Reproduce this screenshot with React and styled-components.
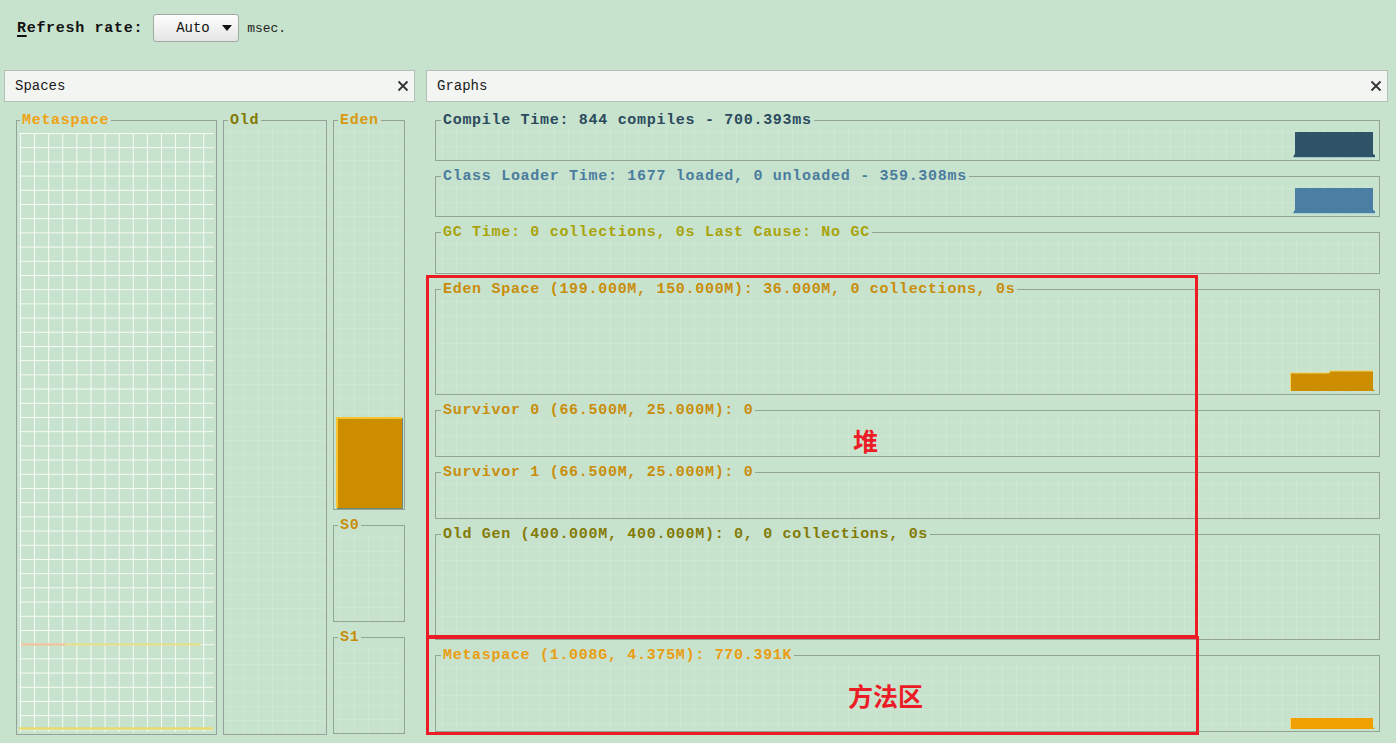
import styled, { createGlobalStyle } from "styled-components"

const GlobalStyle = createGlobalStyle`
  html, body {
    margin: 0;
    padding: 0;
    background: #C8E3CD;
  }
  body {
    font-family: "Liberation Mono", "DejaVu Sans Mono", monospace;
    color: #111;
  }
  * { box-sizing: border-box; }
`

const LEGEND = 16

const graphs = [
  { title: "Compile Time: 844 compiles - 700.393ms", color: "#2B4A5D", h: 49, bar: "compile" },
  { title: "Class Loader Time: 1677 loaded, 0 unloaded - 359.308ms", color: "#4A7C9E", h: 49, bar: "loader" },
  { title: "GC Time: 0 collections, 0s Last Cause: No GC", color: "#A8A30C", h: 50 },
  { title: "Eden Space (199.000M, 150.000M): 36.000M, 0 collections, 0s", color: "#C98D0C", h: 114, bar: "eden" },
  { title: "Survivor 0 (66.500M, 25.000M): 0", color: "#C98D0C", h: 55 },
  { title: "Survivor 1 (66.500M, 25.000M): 0", color: "#C98D0C", h: 55 },
  { title: "Old Gen (400.000M, 400.000M): 0, 0 collections, 0s", color: "#847A06", h: 114 },
  { title: "Metaspace (1.008G, 4.375M): 770.391K", color: "#E89D12", h: 85, bar: "meta" },
]

function Bar({ kind }) {
  if (kind === "compile" || kind === "loader") {
    const fill = kind === "compile" ? "#2F5468" : "#4A7FA3"
    return (
      <svg width="83" height="26" viewBox="0 0 83 26">
        <polygon points="2,0 80,0 80,22 82,23 82,26 0,26 1,23 2,22" fill={fill} />
        <line x1="0" y1="25.5" x2="83" y2="25.5" stroke="#BFE3EA" strokeWidth="0.8" />
      </svg>
    )
  }
  if (kind === "eden") {
    return (
      <svg width="86" height="22" viewBox="0 0 86 22">
        <polygon points="1,3 39,3 40,1 83,1 83,19 85,21 0,21 0,4" fill="#CC8E00" />
        <polyline points="0.5,21 0.5,3 39,3 40,1 83,1" fill="none" stroke="#F6D35A" strokeWidth="1" />
      </svg>
    )
  }
  return (
    <svg width="86" height="11" viewBox="0 0 86 11">
      <polygon points="1,0 83,0 83,9 85,11 0,11" fill="#F0A000" />
      <line x1="0.5" y1="0" x2="0.5" y2="11" stroke="#F8D66A" strokeWidth="1" />
    </svg>
  )
}

function Close() {
  return (
    <CloseBtn>
      <svg width="12" height="12" viewBox="0 0 12 12">
        <path d="M1.5 1.5 L10.5 10.5 M10.5 1.5 L1.5 10.5" stroke="#333" strokeWidth="1.8" />
      </svg>
    </CloseBtn>
  )
}

function MetaspaceChart({ h }) {
  return (
    <MetaGrid style={{ height: h }}>
      <svg width="100%" height="100%">
        <defs>
          <pattern id="mgrid" width="14.1" height="14.2" patternUnits="userSpaceOnUse" x="1" y="0">
            <path d="M0 0 L14.1 0 M0 0 L0 14.2" stroke="#F7FCF7" strokeWidth="1.9" fill="none" />
          </pattern>
        </defs>
        <rect x="0" y="0" width="100%" height="100%" fill="url(#mgrid)" />
        <line x1="2" y1="511.5" x2="182" y2="511.5" stroke="#E9DF86" strokeWidth="2" />
        <line x1="2" y1="511.5" x2="46" y2="511.5" stroke="#EFC2A8" strokeWidth="2" />
        <line x1="0" y1="595.5" x2="194" y2="595.5" stroke="#E9DA6C" strokeWidth="2.5" />
      </svg>
    </MetaGrid>
  )
}

export default function App() {
  return (
    <Page>
      <GlobalStyle />
      <Toolbar>
        <RateLabel><u>R</u>efresh rate:</RateLabel>
        <Dropdown>
          <span>Auto</span>
          <svg width="10" height="6" viewBox="0 0 10 6">
            <polygon points="0,0 10,0 5,6" fill="#111" />
          </svg>
        </Dropdown>
        <Unit>msec.</Unit>
      </Toolbar>
      <Panels>
        <Panel $w={411}>
          <PanelHeader>
            <span>Spaces</span>
            <Close />
          </PanelHeader>
          <SpacesBody>
            <Titled $w={201} $h={623}>
              <Legend $c="#F0A215" $ml={3}>Metaspace</Legend>
              <MetaspaceChart h={623 - LEGEND - 1 - 7} />
            </Titled>
            <Titled $w={104} $h={623}>
              <Legend $c="#847A06" $ml={4}>Old</Legend>
              <Plot $h={623 - LEGEND - 1} />
            </Titled>
            <EdenColumn>
              <Titled $h={398}>
                <Legend $c="#D99A12" $ml={4}>Eden</Legend>
                <Plot $h={398 - LEGEND - 1} $pad="0 2px 1px 2px">
                  <EdenFill />
                </Plot>
              </Titled>
              <Titled $h={105}>
                <Legend $c="#C98D0C" $ml={4}>S0</Legend>
                <Plot $h={105 - LEGEND - 1} />
              </Titled>
              <Titled $h={105}>
                <Legend $c="#C98D0C" $ml={4}>S1</Legend>
                <Plot $h={105 - LEGEND - 1} />
              </Titled>
            </EdenColumn>
          </SpacesBody>
        </Panel>
        <Panel $w={962}>
          <PanelHeader>
            <span>Graphs</span>
            <Close />
          </PanelHeader>
          <GraphsBody>
            {graphs.map((g) => (
              <Titled key={g.title} $h={g.h}>
                <Legend $c={g.color} $ml={5}>{g.title}</Legend>
                <Plot $h={g.h - LEGEND - 1} $pad="0 3px 2px 0">
                  {g.bar && <Bar kind={g.bar} />}
                </Plot>
              </Titled>
            ))}
            <Annotation $top={173} $h={363} $w={772}>
              <Note $left={424} $top={150}>堆</Note>
            </Annotation>
            <Annotation $top={534} $h={99} $w={773}>
              <Note $left={419} $top={44}>方法区</Note>
            </Annotation>
          </GraphsBody>
        </Panel>
      </Panels>
    </Page>
  )
}

const Page = styled.div`
  width: 1396px;
  height: 743px;
  overflow: hidden;
  background: #C8E3CD;
`
const Toolbar = styled.div`
  height: 70px;
  display: flex;
  align-items: center;
  padding: 0 0 14px 17px;
`
const RateLabel = styled.span`
  font: bold 15px/1 "Liberation Mono", monospace;
  letter-spacing: 0.7px;
  color: #111;
  margin-right: 10px;
  u { text-decoration-thickness: 2px; text-underline-offset: 3px; }
`
const Dropdown = styled.div`
  width: 86px;
  height: 28px;
  display: flex;
  align-items: center;
  gap: 12px;
  padding-left: 22px;
  border: 1px solid #A3A9A4;
  border-radius: 3px;
  background: linear-gradient(#FDFDFD, #E4E6E4);
  font: 14px/1 "Liberation Mono", monospace;
  color: #111;
  margin-right: 8px;
`
const Unit = styled.span`
  font: 13px/1 "Liberation Mono", monospace;
  color: #222;
`
const Panels = styled.div`
  display: flex;
  gap: 11px;
  padding-left: 4px;
`
const Panel = styled.section`
  width: ${(p) => p.$w}px;
  display: flex;
  flex-direction: column;
`
const PanelHeader = styled.div`
  height: 32px;
  display: flex;
  align-items: center;
  justify-content: space-between;
  padding: 0 4px 0 10px;
  background: #F3F5F2;
  border: 1px solid #B7C0B8;
  font: 14px/1 "Liberation Mono", monospace;
  color: #1A1A1A;
`
const CloseBtn = styled.span`
  display: flex;
  width: 14px;
  height: 14px;
  align-items: center;
  justify-content: center;
`
const SpacesBody = styled.div`
  display: flex;
  gap: 6px;
  padding: 10px 0 0 12px;
`
const EdenColumn = styled.div`
  width: 72px;
  display: flex;
  flex-direction: column;
  gap: 7px;
`
const Titled = styled.fieldset`
  margin: 0;
  padding: 0;
  min-width: 0;
  width: ${(p) => (p.$w ? `${p.$w}px` : "100%")};
  height: ${(p) => p.$h}px;
  border: 1px solid #95A299;
`
const Legend = styled.legend`
  margin-left: ${(p) => p.$ml}px;
  padding: 0 2px;
  height: ${LEGEND}px;
  font: bold 15px/18px "Liberation Mono", monospace;
  letter-spacing: 0.7px;
  color: ${(p) => p.$c};
  white-space: nowrap;
`
const Plot = styled.div`
  height: ${(p) => p.$h}px;
  display: flex;
  flex-direction: column;
  align-items: flex-end;
  justify-content: flex-end;
  padding: ${(p) => p.$pad || "0"};
  background-image:
    linear-gradient(90deg, rgba(255, 255, 255, 0.14) 1px, transparent 1px),
    linear-gradient(rgba(255, 255, 255, 0.1) 1px, transparent 1px);
  background-size: 14px 14px;
  background-position: 6px 4px;
`
const EdenFill = styled.div`
  width: 100%;
  height: 91px;
  background: #CC8E00;
  border-top: 2px solid #F7C531;
  border-left: 2px solid #F7C531;
  box-shadow: 1px 1px 0 #6E8A6E;
`
const MetaGrid = styled.div`
  margin: 5px 2px 2px 2px;
`
const GraphsBody = styled.div`
  position: relative;
  display: flex;
  flex-direction: column;
  gap: 7px;
  padding: 10px 8px 0 9px;
`
const Annotation = styled.div`
  position: absolute;
  left: 0;
  top: ${(p) => p.$top}px;
  width: ${(p) => p.$w}px;
  height: ${(p) => p.$h}px;
  border: 3px solid #EC1C27;
  pointer-events: none;
`
const Note = styled.span`
  position: absolute;
  left: ${(p) => p.$left}px;
  top: ${(p) => p.$top}px;
  font: bold 25px/1 "Noto Sans CJK SC", sans-serif;
  color: #EC1C27;
`
